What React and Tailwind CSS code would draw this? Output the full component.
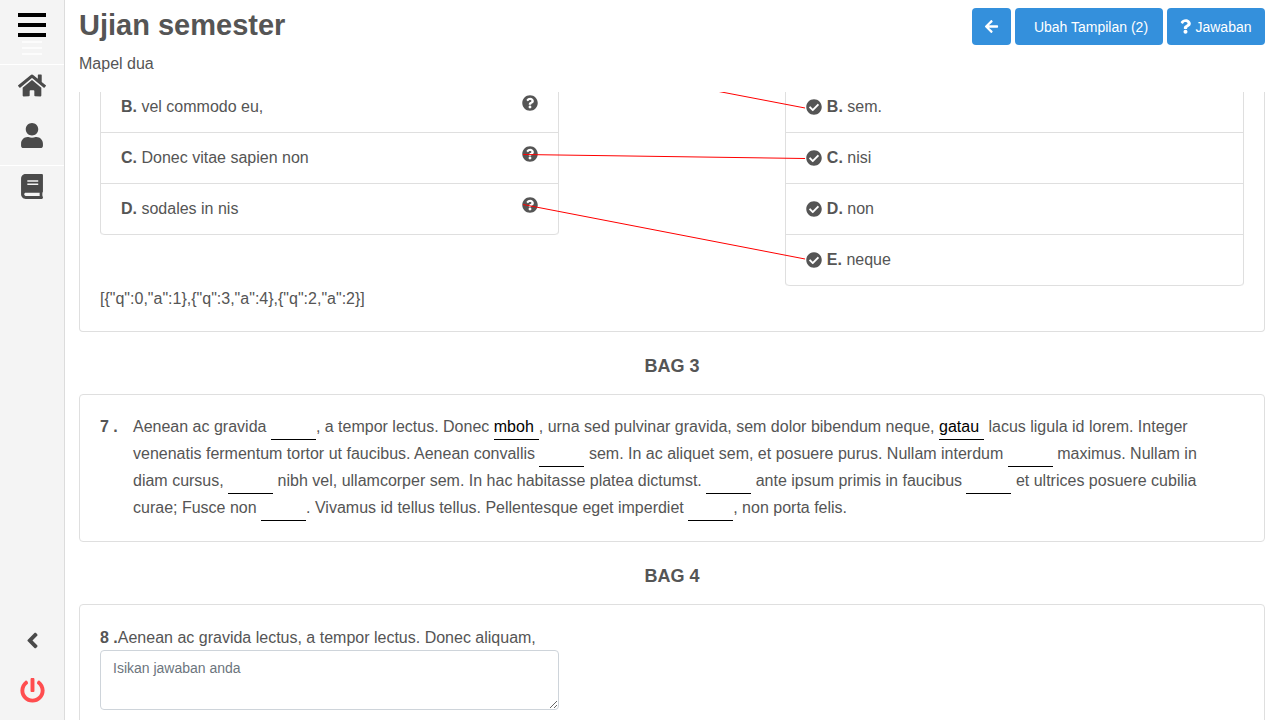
import React from "react";
import {
  FaAngleLeft,
  FaArrowLeft,
  FaBook,
  FaCheckCircle,
  FaHome,
  FaPowerOff,
  FaQuestion,
  FaQuestionCircle,
  FaUser,
} from "react-icons/fa";

const questions = [
  { key: "B", text: "vel commodo eu," },
  { key: "C", text: "Donec vitae sapien non" },
  { key: "D", text: "sodales in nis" },
];

const answers = [
  { key: "B", text: "sem." },
  { key: "C", text: "nisi" },
  { key: "D", text: "non" },
  { key: "E", text: "neque" },
];

function Sidebar() {
  return (
    <nav
      aria-label="Menu"
      className="flex w-[65px] shrink-0 flex-col border-r border-[#dcdcdc] bg-[#f4f4f4] text-[#4a4a4a]"
    >
      <div className="flex h-[65px] flex-col items-center border-b border-white pt-[13px]">
        <button type="button" aria-label="Buka menu" className="flex flex-col gap-1.5">
          <span className="h-1 w-7 bg-black" />
          <span className="h-1 w-7 bg-black" />
          <span className="h-1 w-7 bg-black" />
        </button>
        <div className="flex flex-col gap-1 pt-1">
          <span className="h-0.5 w-5 bg-[#fcfcfc]" />
          <span className="h-0.5 w-5 bg-[#fcfcfc]" />
          <span className="h-0.5 w-5 bg-[#fcfcfc]" />
        </div>
      </div>
      <div className="flex flex-col items-center gap-[25px] border-b border-white pt-2 pb-[17px]">
        <a href="#beranda" aria-label="Beranda">
          <FaHome className="h-[25px] w-7" />
        </a>
        <a href="#profil" aria-label="Profil">
          <FaUser className="h-[25px] w-[22px]" />
        </a>
      </div>
      <div className="flex flex-col items-center pt-2">
        <a href="#ujian" aria-label="Ujian">
          <FaBook className="h-[25px] w-[22px]" />
        </a>
      </div>
      <div className="mt-auto flex flex-col items-center gap-[25px] pb-[17px]">
        <button type="button" aria-label="Ciutkan">
          <FaAngleLeft className="h-[25px] w-[13px]" />
        </button>
        <button type="button" aria-label="Keluar" className="text-[#ff4d4f]">
          <FaPowerOff className="size-[25px]" />
        </button>
      </div>
    </nav>
  );
}

function Blank({ label, value = "" }) {
  return (
    <input
      type="text"
      aria-label={label}
      defaultValue={value}
      className="h-[26px] w-[45px] border-b border-black text-black outline-none"
    />
  );
}

function Matching() {
  const row =
    "flex justify-between border-b border-[#dfdfdf] px-5 py-3 leading-[26px] first:pt-0.5";
  const list = "col-span-5 self-start rounded-b border-x border-[#dfdfdf]";
  return (
    <section className="relative rounded-b border-x border-b border-[#dfdfdf] px-5 pb-[19px]">
      <div className="relative">
        <div className="grid grid-cols-12 gap-x-[30px]">
          <ul className={list}>
            {questions.map((q) => (
              <li key={q.key} className={row + " last:rounded-b"}>
                <span>
                  <b>{q.key}.</b> {q.text}
                </span>
                <FaQuestionCircle className="mt-px size-4" />
              </li>
            ))}
          </ul>
          <ul className={list + " col-start-8"}>
            {answers.map((a) => (
              <li key={a.key} className={row + " last:rounded-b"}>
                <span className="flex items-center gap-[5px]">
                  <FaCheckCircle className="size-4" />
                  <span>
                    <b>{a.key}.</b> {a.text}
                  </span>
                </span>
              </li>
            ))}
          </ul>
        </div>
        <svg
          className="pointer-events-none absolute inset-0 size-full"
          stroke="red"
          strokeWidth="1"
          aria-hidden="true"
        >
          <line x1="36.98%" y1="-38" x2="61.63%" y2="16" />
          <line x1="36.98%" y1="62.5" x2="61.63%" y2="66.5" />
          <line x1="36.98%" y1="112.5" x2="61.63%" y2="167" />
        </svg>
      </div>
      <p className="leading-[26px]">{'[{"q":0,"a":1},{"q":3,"a":4},{"q":2,"a":2}]'}</p>
    </section>
  );
}

export default function App() {
  return (
    <div className="flex h-screen overflow-hidden bg-white font-['Liberation_Sans',Arial,sans-serif] text-base text-[#555]">
      <Sidebar />
      <main className="flex min-w-0 flex-1 flex-col pr-[15px] pl-[14px]">
        <header className="flex h-[92px] shrink-0 items-start justify-between pt-2">
          <div>
            <h1 className="text-[29px] leading-[34px] font-bold">Ujian semester</h1>
            <p className="pt-2.5 leading-6">Mapel dua</p>
          </div>
          <div className="flex gap-1 text-sm text-white">
            <button
              type="button"
              aria-label="Kembali"
              className="flex h-[37px] w-[39px] items-center justify-center rounded bg-[#3490dc]"
            >
              <FaArrowLeft className="size-[15px]" />
            </button>
            <button
              type="button"
              className="h-[37px] w-[148px] rounded bg-[#3490dc] pl-1"
            >
              Ubah Tampilan (2)
            </button>
            <button
              type="button"
              className="flex h-[37px] w-[98px] items-center justify-center gap-1 rounded bg-[#3490dc]"
            >
              <FaQuestion className="h-[15px] w-[11px]" />
              Jawaban
            </button>
          </div>
        </header>

        <div className="min-h-0 flex-1 overflow-hidden">
          <Matching />

          <h2 className="pt-[21px] pb-[15px] text-center text-lg leading-[26px] font-bold">
            BAG 3
          </h2>
          <section className="flex rounded border border-[#dfdfdf] px-5 pt-[18px] pb-5">
            <b className="w-[33px] shrink-0 leading-[27px]">7 .</b>
            <p className="pr-6 leading-[27px]">
              Aenean ac gravida <Blank label="Isian 1" />, a tempor lectus. Donec{" "}
              <Blank label="Isian 2" value="mboh" />, urna sed pulvinar gravida, sem dolor
              bibendum neque, <Blank label="Isian 3" value="gatau" /> lacus ligula id lorem.
              Integer venenatis fermentum tortor ut faucibus. Aenean convallis{" "}
              <Blank label="Isian 4" /> sem. In ac aliquet sem, et posuere purus. Nullam
              interdum <Blank label="Isian 5" /> maximus. Nullam in diam cursus,{" "}
              <Blank label="Isian 6" /> nibh vel, ullamcorper sem. In hac habitasse platea
              dictumst. <Blank label="Isian 7" /> ante ipsum primis in faucibus{" "}
              <Blank label="Isian 8" /> et ultrices posuere cubilia curae; Fusce non{" "}
              <Blank label="Isian 9" />. Vivamus id tellus tellus. Pellentesque eget imperdiet{" "}
              <Blank label="Isian 10" />, non porta felis.
            </p>
          </section>

          <h2 className="pt-[21px] pb-[15px] text-center text-lg leading-[26px] font-bold">
            BAG 4
          </h2>
          <section className="rounded border border-[#dfdfdf] px-5 py-5">
            <label htmlFor="jawaban-8" className="block leading-[25px]">
              <b>8 .</b>Aenean ac gravida lectus, a tempor lectus. Donec aliquam,
            </label>
            <div className="grid grid-cols-12 gap-x-[30px]">
              <textarea
                id="jawaban-8"
                placeholder="Isikan jawaban anda"
                className="col-span-5 h-[60px] rounded border border-[#ced4da] px-3 py-1.5 text-sm leading-[22px] outline-none placeholder:text-[#6c757d]"
              />
            </div>
            <div className="h-24" />
          </section>
        </div>
      </main>
    </div>
  );
}
